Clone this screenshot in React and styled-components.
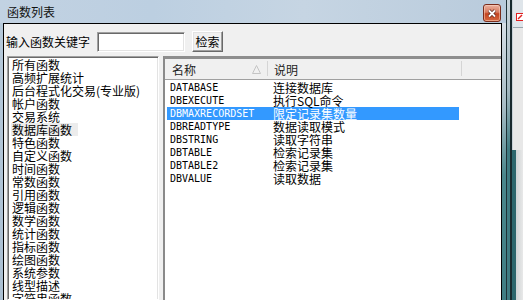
import React from "react";
import styled, { createGlobalStyle, css } from "styled-components";

const GlobalStyle = createGlobalStyle`
  html, body {
    margin: 0;
    padding: 0;
    width: 523px;
    height: 300px;
    overflow: hidden;
    background: #3f7d83;
  }
  #root {
    height: 300px;
  }
`;

const Desktop = styled.div`
  display: flex;
  width: 523px;
  height: 300px;
  overflow: hidden;
  font-family: "Noto Sans CJK SC", "Liberation Sans", sans-serif;
  font-size: 12px;
  color: #000;
`;

const Window = styled.div`
  width: 506px;
  flex: none;
  display: flex;
  flex-direction: column;
`;

const TitleBar = styled.div`
  height: 23px;
  flex: none;
  display: flex;
  justify-content: space-between;
  padding: 0 5px 0 7px;
  background: linear-gradient(90deg, #c2d2e2 0%, #bccfe1 30%, #c6d5e3 60%, #b9cbdc 100%);
`;

const Title = styled.span`
  line-height: 23px;
  color: #111;
`;

const CloseButton = styled.div`
  width: 18px;
  height: 18px;
  margin-top: 4px;
  box-sizing: border-box;
  border: 1px solid #7a2c1c;
  border-radius: 3px;
  display: flex;
  align-items: center;
  justify-content: center;
  background: linear-gradient(180deg, #eab1a0 0%, #d97a5e 45%, #c4441f 55%, #d5673f 100%);
  box-shadow: inset 0 0 0 1px rgba(255, 220, 200, 0.5);
`;

const ClientFrame = styled.div`
  flex: 1;
  min-height: 0;
  display: flex;
  padding: 0 4px 0 3px;
  background:
    linear-gradient(180deg, #d6dfe6 0%, #a9bdc6 30%, #4a878c 55%, #3f7d83 100%) right / 4px 100% no-repeat,
    linear-gradient(180deg, #b6c9da, #aabfd2) left / 3px 100% no-repeat;
`;

const Client = styled.div`
  flex: 1;
  min-width: 0;
  display: flex;
  flex-direction: column;
  border: 1px solid #000;
  border-bottom: none;
  background: #f0f0f0;
`;

const SearchRow = styled.div`
  display: flex;
  align-items: center;
  gap: 7px;
  padding: 7px 0 0 2px;
  height: 21px;
`;

const Label = styled.span`
  line-height: 14px;
`;

const SearchInput = styled.div`
  width: 88px;
  height: 20px;
  box-sizing: border-box;
  background: #fff;
  border: 1px solid;
  border-color: #a0a0a0 #fff #fff #a0a0a0;
  box-shadow: inset 1px 1px 0 #696969, inset -1px -1px 0 #e3e3e3;
`;

const Button = styled.div`
  width: 31px;
  height: 21px;
  box-sizing: border-box;
  display: flex;
  align-items: center;
  justify-content: center;
  background: #f0f0f0;
  border: 1px solid;
  border-color: #fff #696969 #696969 #fff;
  box-shadow: inset -1px -1px 0 #a0a0a0, inset 1px 1px 0 #e3e3e3;
`;

const Panes = styled.div`
  flex: 1;
  min-height: 0;
  display: flex;
  margin-top: 4px;
  padding-left: 3px;
`;

const LeftList = styled.div`
  width: 152px;
  flex: none;
  box-sizing: border-box;
  background: #fff;
  border: 1px solid;
  border-color: #a0a0a0 #fff #fff #a0a0a0;
  box-shadow: inset 1px 1px 0 #696969, inset -1px 0 0 #e3e3e3;
  padding: 1px 0 0 3px;
  overflow: hidden;
`;

const ListItem = styled.div`
  width: fit-content;
  height: 13px;
  line-height: 13px;
  padding: 0 6px 0 1px;
  white-space: nowrap;
  ${(p) =>
    p.$hover &&
    css`
      background: #ececec;
    `}
`;

const Splitter = styled.div`
  width: 4px;
  flex: none;
`;

const RightList = styled.div`
  flex: 1;
  min-width: 0;
  display: flex;
  flex-direction: column;
  background: #fff;
  border-top: 3px solid #8e8e8e;
  border-left: 2px solid #8a8a8a;
  box-shadow: inset 0 1px 0 #b0b0b0;
`;

const Header = styled.div`
  height: 21px;
  flex: none;
  box-sizing: border-box;
  display: flex;
  background: #f0f0f0;
  border-bottom: 1px solid #a0a0a0;
`;

const HeaderCell = styled.div`
  position: relative;
  width: ${(p) => p.$width}px;
  flex: none;
  box-sizing: border-box;
  display: flex;
  align-items: center;
  padding-left: ${(p) => p.$pad}px;
  color: #1e1e1e;

  &::after {
    content: "";
    position: absolute;
    right: 0;
    top: 2px;
    bottom: 3px;
    width: 1px;
    background: #d5d5d5;
  }
`;

const SortMark = styled.svg`
  margin-left: auto;
  margin-right: 7px;
`;

const Rows = styled.div`
  padding: 1px 0 0 2px;
`;

const Row = styled.div`
  display: flex;
  width: 292px;
  height: 13px;
  line-height: 13px;
  white-space: nowrap;
  ${(p) =>
    p.$selected &&
    css`
      background: #3399ff;
      color: #fff;
    `}
`;

const NameCell = styled.span`
  width: 101px;
  flex: none;
  box-sizing: border-box;
  padding-left: 3px;
  font-family: "DejaVu Sans Mono", "Liberation Mono", monospace;
  font-size: 10px;
`;

const DescCell = styled.span`
  padding-left: 5px;
`;

const SideStrip = styled.div`
  flex: 1;
  display: flex;
`;

const Stripe = styled.div`
  width: ${(p) => p.$w}px;
  flex: none;
  background: ${(p) => p.$bg};
`;

const Neighbour = styled.div`
  flex: 1;
  display: flex;
  flex-direction: column;
`;

const NeighbourTop = styled.div`
  height: 150px;
  flex: none;
  box-sizing: border-box;
  padding: 7px 0 0 3px;
  background: linear-gradient(180deg, #dfe5ea 0 27px, #9aa6ad 27px 28px, #e8e8e8 28px);
  border-left: 1px solid #c9d2d8;
`;

const NeighbourBottom = styled.div`
  flex: 1;
  background: linear-gradient(90deg, #2c666c 0 4px, #cfd3d4 4px, #ececec 100%);
`;

const functionGroups = [
  "所有函数",
  "高频扩展统计",
  "后台程式化交易(专业版)",
  "帐户函数",
  "交易系统",
  "数据库函数",
  "特色函数",
  "自定义函数",
  "时间函数",
  "常数函数",
  "引用函数",
  "逻辑函数",
  "数学函数",
  "统计函数",
  "指标函数",
  "绘图函数",
  "系统参数",
  "线型描述",
  "字符串函数",
];

const dbFunctions = [
  ["DATABASE", "连接数据库"],
  ["DBEXECUTE", "执行SQL命令"],
  ["DBMAXRECORDSET", "限定记录集数量"],
  ["DBREADTYPE", "数据读取模式"],
  ["DBSTRING", "读取字符串"],
  ["DBTABLE", "检索记录集"],
  ["DBTABLE2", "检索记录集"],
  ["DBVALUE", "读取数据"],
];

const App = () => {
  return (
    <>
      <GlobalStyle />
      <Desktop>
        <Window>
          <TitleBar>
            <Title>函数列表</Title>
            <CloseButton>
              <svg width="10" height="9" viewBox="0 0 10 9">
                <path d="M2 1.5 L8 7.5 M8 1.5 L2 7.5" stroke="#5a2418" strokeWidth="3.2" />
                <path d="M2 1.5 L8 7.5 M8 1.5 L2 7.5" stroke="#fff" strokeWidth="1.8" />
              </svg>
            </CloseButton>
          </TitleBar>
          <ClientFrame>
            <Client>
              <SearchRow>
                <Label>输入函数关键字</Label>
                <SearchInput />
                <Button>检索</Button>
              </SearchRow>
              <Panes>
                <LeftList>
                  {functionGroups.map((name, i) => (
                    <ListItem key={name} $hover={i === 5}>
                      {name}
                    </ListItem>
                  ))}
                </LeftList>
                <Splitter />
                <RightList>
                  <Header>
                    <HeaderCell $width={103} $pad={7}>
                      名称
                      <SortMark width="9" height="9" viewBox="0 0 9 9">
                        <path d="M4.5 0.5 L8.5 8.5 L0.5 8.5 Z" fill="none" stroke="#c4c4c4" />
                      </SortMark>
                    </HeaderCell>
                    <HeaderCell $width={194} $pad={6}>
                      说明
                    </HeaderCell>
                  </Header>
                  <Rows>
                    {dbFunctions.map(([name, desc], i) => (
                      <Row key={name} $selected={i === 2}>
                        <NameCell>{name}</NameCell>
                        <DescCell>{desc}</DescCell>
                      </Row>
                    ))}
                  </Rows>
                </RightList>
              </Panes>
            </Client>
          </ClientFrame>
        </Window>
        <SideStrip>
          <Stripe $w={1} $bg="#1f3237" />
          <Stripe $w={3} $bg="linear-gradient(180deg, #c9d4db 0%, #a4b8c0 30%, #3f7c82 50%, #3f7c82 100%)" />
          <Stripe $w={2} $bg="#17292d" />
          <Neighbour>
            <NeighbourTop>
              <svg width="8" height="8" viewBox="0 0 8 8">
                <rect x="0.5" y="0.5" width="7" height="7" fill="#fff" stroke="#e02020" />
                <path d="M2 6 L6 2" stroke="#e02020" strokeWidth="1.5" />
              </svg>
            </NeighbourTop>
            <NeighbourBottom />
          </Neighbour>
        </SideStrip>
      </Desktop>
    </>
  );
};

export default App;
